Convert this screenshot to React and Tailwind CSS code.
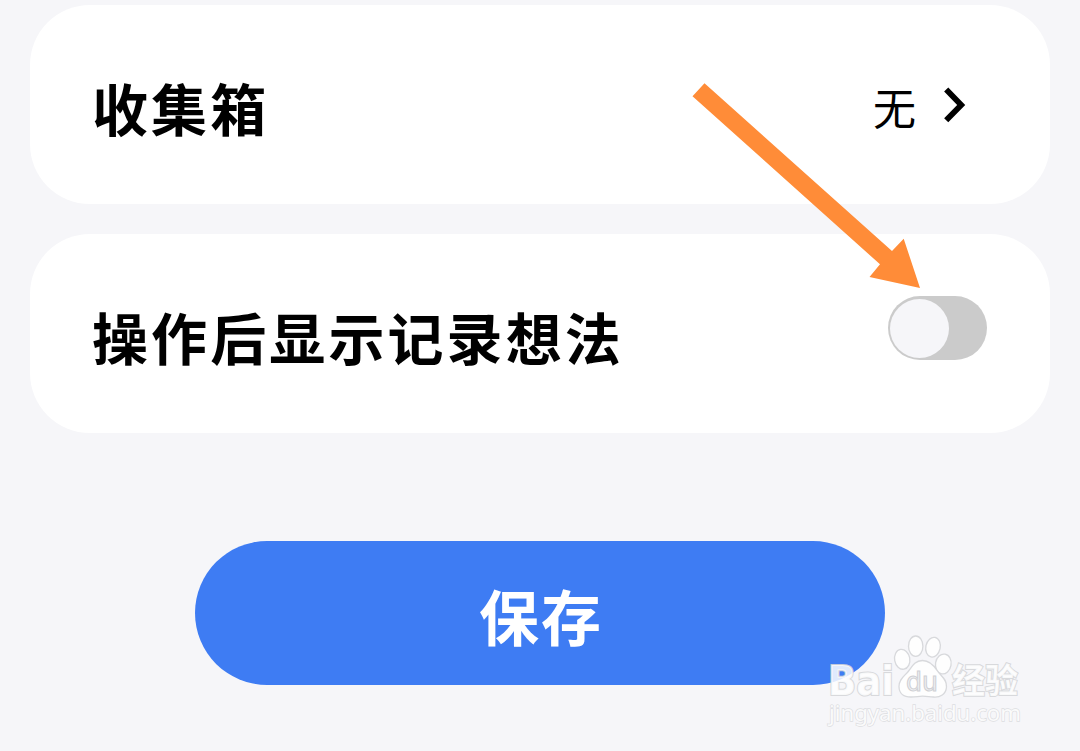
function Chevron() {
  return (
    <svg className="ml-[27px] mr-[21px] h-[36px] w-[24px]" viewBox="0 0 24 36" fill="none">
      <path d="M3.2 2.5 L18.2 18 L3.2 33.3" stroke="#000" strokeWidth="5.8" />
    </svg>
  );
}

function Card({ label, children }) {
  return (
    <section className="flex h-[199px] items-center justify-between rounded-[60px] bg-white pl-[62px] pr-[62px]">
      <span className="pt-[4px] text-[56px] leading-none font-bold tracking-[3.1px] whitespace-nowrap text-black">
        {label}
      </span>
      {children}
    </section>
  );
}

function Arrow() {
  return (
    <svg className="pointer-events-none absolute top-[80px] left-[690px] h-[212px] w-[234px]" viewBox="690 80 234 212">
      <path d="M704.5 83.3 L892 251 L903.7 238.7 L920 288 L869.5 277 L880 264.3 L692.5 96.3 Z" fill="#ff8c38" />
    </svg>
  );
}

function Watermark() {
  return (
    <svg
      className="pointer-events-none absolute top-[630px] left-[820px] h-[100px] w-[210px]"
      viewBox="820 630 210 100"
    >
      <g fill="#fff" fillOpacity="0.82" stroke="#d4d5d8" strokeWidth="1.3" strokeOpacity="0.9">
        <ellipse cx="902.2" cy="659.3" rx="7.6" ry="10" transform="rotate(-10 902.2 659.3)" />
        <ellipse cx="915.7" cy="646.2" rx="7.2" ry="10.2" />
        <ellipse cx="933" cy="647.2" rx="7.2" ry="10" transform="rotate(12 933 647.2)" />
        <ellipse cx="943.3" cy="664" rx="7.8" ry="10" transform="rotate(10 943.3 664)" />
        <path d="M922.5 660.5 C930 660.5 934 665.5 937.5 671 C941 676.5 947 679 946.5 687 C946 694.5 940 697.5 933.5 697 C929 696.7 926 696.2 922.5 696.2 C919 696.2 915.5 697 911 697 C904 697 899 693.5 899 686.5 C899 678.5 905 676 909 670.5 C912.5 665.5 915.5 660.5 922.5 660.5 Z" />
      </g>
      <g fill="#fff" fillOpacity="0.85" stroke="#d4d5d8" strokeOpacity="0.9" paintOrder="stroke">
        <text
          x="828"
          y="695"
          fontSize="41"
          fontWeight="700"
          strokeWidth="2.2"
          textLength="66"
          lengthAdjust="spacingAndGlyphs"
          className="font-['DejaVu_Sans',sans-serif]"
        >
          Bai
        </text>
        <text
          x="952"
          y="693"
          fontSize="34"
          fontWeight="700"
          strokeWidth="2"
          textLength="66"
          lengthAdjust="spacingAndGlyphs"
          className="font-['Noto_Sans_CJK_SC',sans-serif]"
        >
          经验
        </text>
        <text
          x="829"
          y="721"
          fontSize="21.5"
          strokeWidth="1.3"
          strokeOpacity="0.75"
          textLength="192"
          lengthAdjust="spacingAndGlyphs"
          className="font-['Noto_Sans',sans-serif]"
        >
          jingyan.baidu.com
        </text>
      </g>
      <text
        x="906"
        y="691"
        fontSize="27"
        textLength="32"
        lengthAdjust="spacingAndGlyphs"
        fill="#f0f1f3"
        stroke="#cfd0d4"
        strokeWidth="1.1"
        className="font-['DejaVu_Sans',sans-serif]"
      >
        du
      </text>
    </svg>
  );
}

export default function App() {
  return (
    <main className="relative flex h-[751px] w-[1080px] flex-col overflow-hidden bg-[#f6f6f9] px-[30px] pt-[5px] font-['Noto_Sans_CJK_SC',sans-serif]">
      <div className="flex flex-col gap-[30px]">
        <Card label="收集箱">
          <div className="flex items-center">
            <span className="pt-[3px] text-[43px] leading-none font-normal text-black">无</span>
            <Chevron />
          </div>
        </Card>
        <Card label="操作后显示记录想法">
          <button
            type="button"
            role="switch"
            aria-checked="false"
            className="mt-[-11px] mr-[1px] flex h-[64px] w-[99px] items-center rounded-full bg-[#cbcbcb] pl-[2px]"
          >
            <span className="size-[59px] rounded-full bg-[#f6f6f9]" />
          </button>
        </Card>
      </div>
      <button
        type="button"
        className="mt-[108px] flex h-[144px] w-[690px] items-center justify-center self-center rounded-full bg-[#3e7cf3] pt-[4px] text-[60px] leading-none font-bold tracking-[2px] text-white"
      >
        <span className="pl-[2px]">保存</span>
      </button>
      <Arrow />
      <Watermark />
    </main>
  );
}
